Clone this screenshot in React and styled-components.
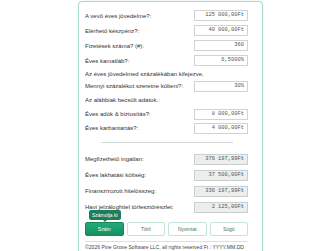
import React from "react";
import styled, { createGlobalStyle } from "styled-components";

const Global = createGlobalStyle`
  html, body { margin: 0; padding: 0; background: #ffffff; }
  body { font-family: "Liberation Sans", Arial, sans-serif; }
`;

const Card = styled.div`
  box-sizing: border-box;
  width: 185px;
  margin: 1px 0 0 78px;
  padding: 6px 14px 2px 6px;
  border: 1px solid #a9dcc9;
  border-radius: 4px;
  background: #fff;
  box-shadow: 0 0 2px rgba(80, 170, 140, 0.25);
`;

const Row = styled.div`
  display: flex;
  align-items: center;
  justify-content: space-between;
  height: ${(p) => p.$h || 15}px;
`;

const Label = styled.span`
  font-size: 6px;
  color: #333;
  white-space: nowrap;
`;

const Note = styled.div`
  display: flex;
  align-items: center;
  height: ${(p) => p.$h || 12}px;
  font-size: 6px;
  color: #333;
  white-space: nowrap;
`;

const Field = styled.div`
  box-sizing: border-box;
  width: 54px;
  height: 11px;
  padding: 0 3px;
  border: 1px solid ${(p) => (p.$out ? "#c9cfcc" : "#cfd3d1")};
  background: ${(p) => (p.$out ? "#eceeed" : "#fff")};
  font-family: "Liberation Mono", "Courier New", monospace;
  font-size: 5.4px;
  line-height: 9px;
  color: #555;
  text-align: right;
  white-space: nowrap;
`;

const Sep = styled.hr`
  width: 132px;
  margin: 7px auto 8px;
  border: none;
  border-top: 1.5px solid #d4d8d6;
`;

const Buttons = styled.div`
  position: relative;
  display: grid;
  grid-template-columns: repeat(4, 1fr);
  gap: 3px;
  margin-top: 7px;
`;

const Btn = styled.button`
  height: 14px;
  padding: 0;
  border-radius: 2px;
  font-family: "Liberation Sans", Arial, sans-serif;
  font-size: 5px;
  border: 1px solid ${(p) => (p.$primary ? "#14885a" : "#c5e3d8")};
  background: ${(p) =>
    p.$primary ? "linear-gradient(#22ab78, #15915f)" : "#fff"};
  color: ${(p) => (p.$primary ? "#fff" : "#3d7a66")};
`;

const Tip = styled.div`
  position: absolute;
  left: 4px;
  top: -12px;
  padding: 0 3px;
  height: 10px;
  line-height: 10px;
  border-radius: 2px;
  background: #1e7d57;
  color: #fff;
  font-size: 5px;
  white-space: nowrap;
  &::after {
    content: "";
    position: absolute;
    left: 50%;
    bottom: -2px;
    margin-left: -2px;
    border-left: 2px solid transparent;
    border-right: 2px solid transparent;
    border-top: 2px solid #1e7d57;
  }
`;

const Footer = styled.div`
  margin-top: 5px;
  border-top: 1px solid #dcdfdd;
  height: 11px;
  line-height: 11px;
  font-size: 5.1px;
  color: #444;
  white-space: nowrap;
`;

const inputs = [
  ["A vevő éves jövedelme?:", "125 000,00Ft"],
  ["Elérhető készpénz?:", "40 000,00Ft"],
  ["Fizetések száma? (#):", "360"],
  ["Éves kamatláb?:", "6,5000%"],
];

const outputs = [
  ["Megfizethető ingatlan:", "376 197,99Ft"],
  ["Éves lakhatási költség:", "37 500,00Ft"],
  ["Finanszírozott hitelösszeg:", "336 197,99Ft"],
  ["Havi jelzáloghitel törlesztőrészlet:", "2 125,00Ft"],
];

export default function App() {
  return (
    <>
      <Global />
      <Card>
        {inputs.map(([l, v]) => (
          <Row key={l}>
            <Label>{l}</Label>
            <Field>{v}</Field>
          </Row>
        ))}
        <Note $h={11}>Az éves jövedelmed százalékában kifejezve,</Note>
        <Row $h={14}>
          <Label>Mennyi százalékot szeretne költeni?:</Label>
          <Field>30%</Field>
        </Row>
        <Note $h={14}>Az alábbiak becsült adatok.:</Note>
        <Row $h={14}>
          <Label>Éves adók &amp; biztosítás?:</Label>
          <Field>8 000,00Ft</Field>
        </Row>
        <Row $h={14}>
          <Label>Éves karbantartás?:</Label>
          <Field>4 000,00Ft</Field>
        </Row>
        <Sep />
        {outputs.map(([l, v]) => (
          <Row key={l} $h={16}>
            <Label>{l}</Label>
            <Field $out>{v}</Field>
          </Row>
        ))}
        <Buttons>
          <Tip>Számolja ki</Tip>
          <Btn $primary>Szám</Btn>
          <Btn>Törli</Btn>
          <Btn>Nyomtat</Btn>
          <Btn>Súgó</Btn>
        </Buttons>
        <Footer>©2026 Pine Grove Software LLC, all rights reserved Ft : YYYY.MM.DD</Footer>
      </Card>
    </>
  );
}
